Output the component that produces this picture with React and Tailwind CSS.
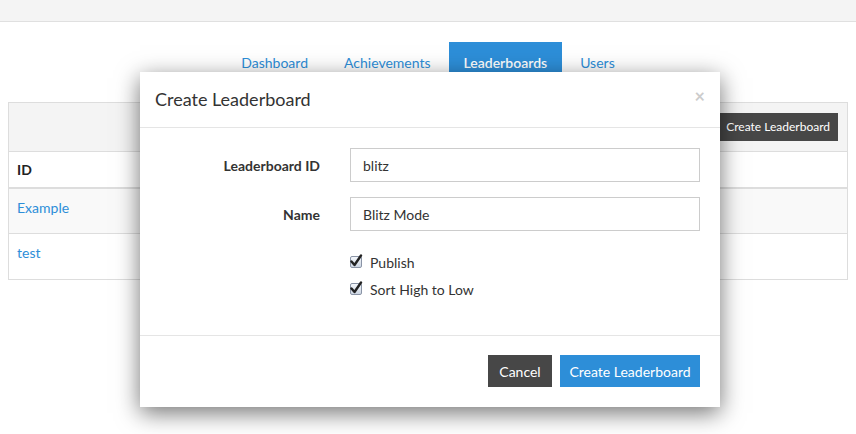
function Check({ label }) {
    return (
        <label className="flex h-[20px] items-center gap-[8px]">
            <span className="relative h-[12px] w-[12px] rounded-[2px] border border-[#8a94a6] bg-gradient-to-b from-[#f4f7fb] to-[#cdd6e3]">
                <svg viewBox="0 0 14 14" className="absolute -right-[2px] -top-[3px] h-[14px] w-[14px]">
                    <path d="M2.5 7.5 L5.5 11 L12 1.5" fill="none" stroke="#222" strokeWidth="2.4" strokeLinecap="round" strokeLinejoin="round" />
                </svg>
            </span>
            {label}
        </label>
    );
}

export default function App() {
    const tabs = ["Dashboard", "Achievements", "Leaderboards", "Users"];

    return (
        <div className="relative min-h-[434px] bg-white font-['Lato',sans-serif] text-[14px] text-[#333]">

            <div className="h-[22px] border-b border-[#e0e0e0] bg-[#f4f4f4]" />

            <nav className="mt-[20px] flex justify-center">
                {tabs.map((t) => (
                    <a
                        key={t}
                        className={
                            t === "Leaderboards"
                                ? "flex h-[40px] items-center bg-[#2d8ed8] px-[15px] font-semibold text-white"
                                : "flex h-[40px] items-center px-[18px] text-[#2d8ed8]"
                        }
                    >
                        {t}
                    </a>
                ))}
            </nav>

            <div className="mx-[8px] mt-[20px] border border-[#ddd]">

                <div className="flex h-[49px] items-center justify-end border-b border-[#ddd] bg-[#f4f4f4] pr-[9px]">
                    <button className="h-[28px] bg-[#474747] px-[8px] text-[12px] text-white">
                        Create Leaderboard
                    </button>
                </div>

                <div className="flex h-[37px] items-center border-b-2 border-[#ddd] px-[8px] font-bold text-[#222]">
                    ID
                </div>

                <div className="h-[45px] border-b border-[#ddd] bg-[#f9f9f9] px-[8px] pt-[9px] leading-[20px] text-[#2d8ed8]">
                    Example
                </div>

                <div className="h-[45px] px-[8px] pt-[9px] leading-[20px] text-[#2d8ed8]">
                    test
                </div>

            </div>

            <div className="absolute left-[140px] top-[72px] w-[580px] bg-white shadow-[0_6px_22px_rgba(0,0,0,0.55)]">

                <div className="flex h-[56px] items-center justify-between border-b border-[#e5e5e5] px-[15px]">
                    <h2 className="text-[18px] text-[#333]">Create Leaderboard</h2>
                    <span className="-mt-[8px] text-[18px] font-bold leading-none text-[#ccc]">×</span>
                </div>

                <div className="px-[20px] pb-[36px] pt-[20px]">

                    <div className="flex items-center gap-[30px]">
                        <label className="w-[160px] text-right font-bold">Leaderboard ID</label>
                        <input
                            readOnly
                            value="blitz"
                            className="h-[34px] w-[350px] border border-[#ccc] px-[12px] text-[#333] outline-none"
                        />
                    </div>

                    <div className="mt-[15px] flex items-center gap-[30px]">
                        <label className="w-[160px] text-right font-bold">Name</label>
                        <input
                            readOnly
                            value="Blitz Mode"
                            className="h-[34px] w-[350px] border border-[#ccc] px-[12px] text-[#333] outline-none"
                        />
                    </div>

                    <div className="ml-[190px] mt-[21px] flex flex-col gap-[7px]">
                        <Check label="Publish" />
                        <Check label="Sort High to Low" />
                    </div>

                </div>

                <div className="flex justify-end gap-[8px] border-t border-[#e5e5e5] px-[20px] pb-[20px] pt-[19px]">
                    <button className="h-[32px] w-[64px] bg-[#474747] text-white">
                        Cancel
                    </button>
                    <button className="h-[32px] w-[140px] bg-[#2d8ed8] text-white">
                        Create Leaderboard
                    </button>
                </div>

            </div>

        </div>
    );
}
